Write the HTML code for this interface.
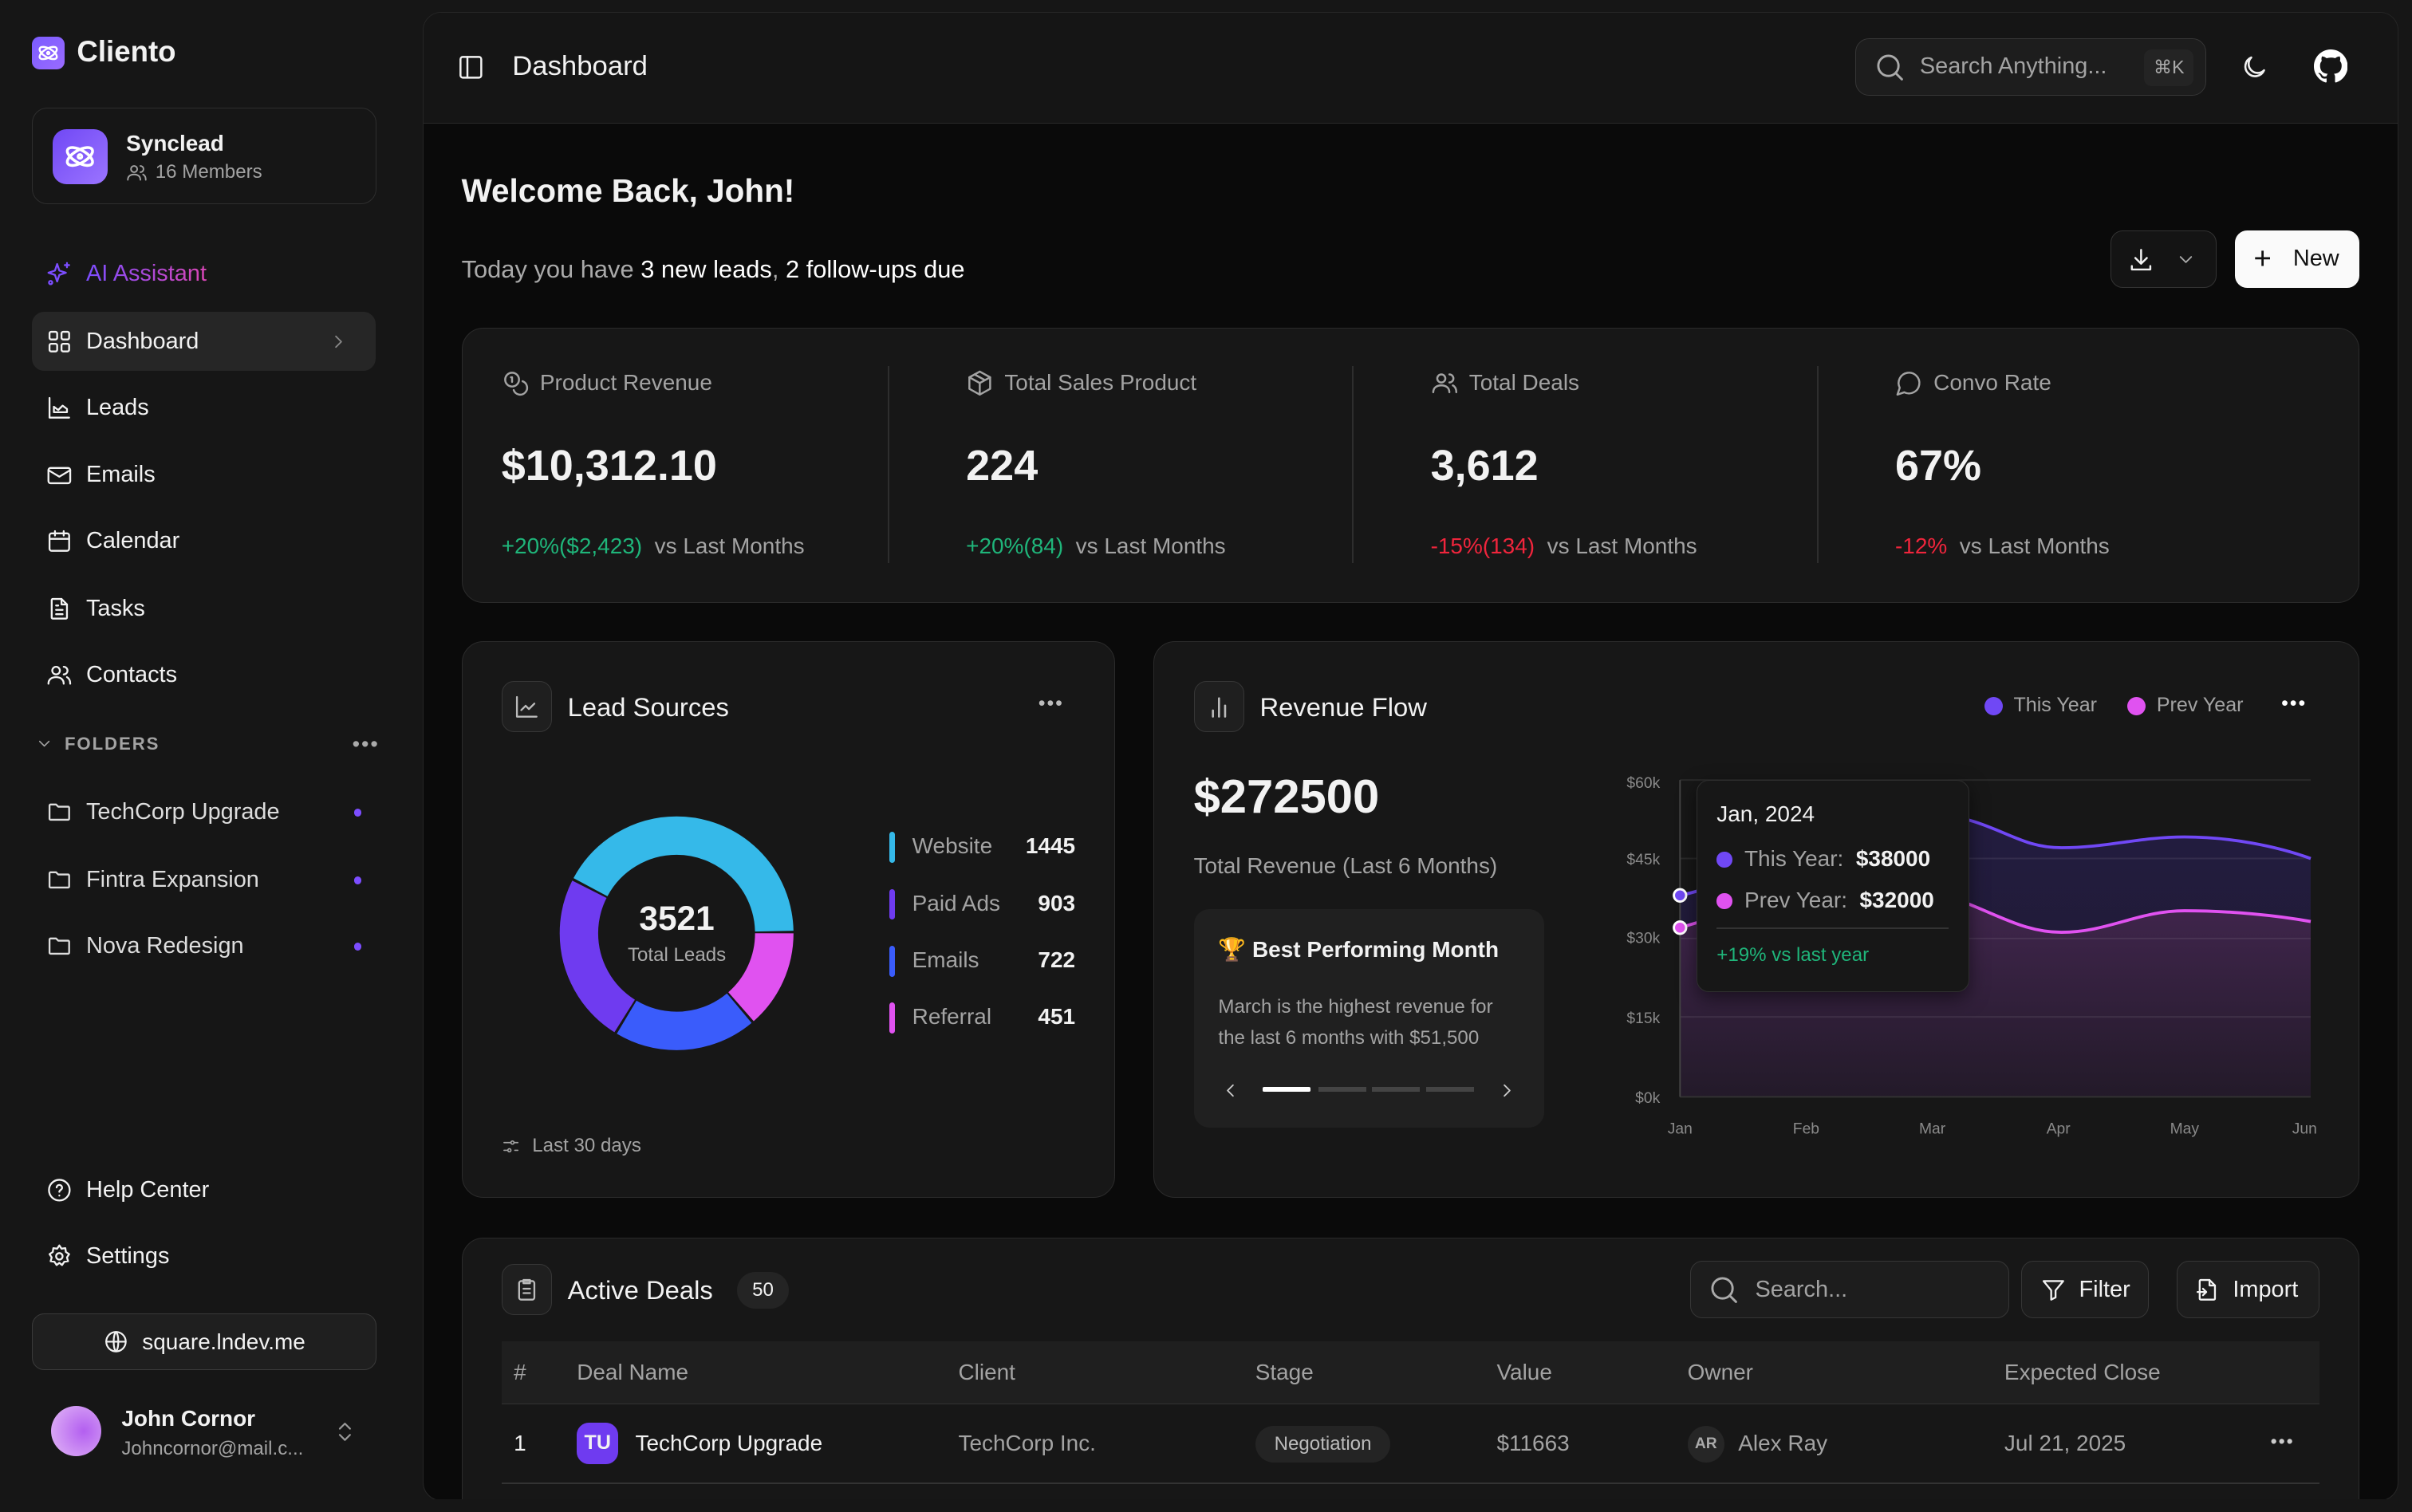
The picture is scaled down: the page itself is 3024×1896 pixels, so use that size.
<!DOCTYPE html>
<html><head><meta charset="utf-8"><style>
*{box-sizing:border-box;margin:0;padding:0}
html,body{width:3024px;height:1896px;overflow:hidden;background:#161616}
#w{zoom:1.92857;width:1568px;height:983px;position:relative;font-family:"Liberation Sans",sans-serif;color:#f2f2f2;background:#161616}
.a{position:absolute}
svg.i{fill:none;stroke:currentColor;stroke-width:1.7;stroke-linecap:round;stroke-linejoin:round}
.nav{position:absolute;left:21px;width:223px;height:38px;display:flex;align-items:center;padding-left:9px;font-size:15px;color:#f2f2f2}
.nav svg{width:17px;height:17px;margin-right:9px}
.card{position:absolute;background:#171717;border:1px solid #2b2b2b;border-radius:14px}
.muted{color:#a3a3a3}
.green{color:#1fb57a}.red{color:#f0253c}
.ib{position:absolute;width:33px;height:33px;border:1px solid #363636;border-radius:8px;background:#1f1f1f;display:flex;align-items:center;justify-content:center;color:#bbb}
.ib svg{width:17px;height:17px}
.dot{width:5px;height:5px;border-radius:50%;background:#7c4dff;position:absolute;left:209px}
</style></head><body><div id="w">
<div class="a" style="left:21px;top:24px;width:21px;height:21px;border-radius:5px;background:linear-gradient(135deg,#7b5cff,#9a6bff);display:flex;align-items:center;justify-content:center">
<svg class="i" viewBox="0 0 24 24" width="15" height="15" style="stroke:#fff;stroke-width:2"><ellipse cx="12" cy="12" rx="10" ry="4.5" transform="rotate(30 12 12)"/><ellipse cx="12" cy="12" rx="10" ry="4.5" transform="rotate(-30 12 12)"/><circle cx="12" cy="12" r="1.2"/></svg></div>
<div class="a" style="left:50px;top:23px;font-size:19px;font-weight:bold">Cliento</div>
<div class="a" style="left:21px;top:70px;width:224px;height:63px;border:1px solid #2e2e2e;border-radius:10px"></div>
<div class="a" style="left:34px;top:84px;width:36px;height:36px;border-radius:9px;background:linear-gradient(135deg,#7048f5,#9b74ff);display:flex;align-items:center;justify-content:center">
<svg class="i" viewBox="0 0 24 24" width="22" height="22" style="stroke:#fff;stroke-width:2"><ellipse cx="12" cy="12" rx="10" ry="4.5" transform="rotate(30 12 12)"/><ellipse cx="12" cy="12" rx="10" ry="4.5" transform="rotate(-30 12 12)"/><circle cx="12" cy="12" r="1.3"/></svg></div>
<div class="a" style="left:82px;top:85px;font-size:14.5px;font-weight:bold">Synclead</div>
<div class="a muted" style="left:82px;top:105px;font-size:12.5px;display:flex;align-items:center"><svg class="i" viewBox="0 0 24 24" width="14" height="14" style="margin-right:5px"><circle cx="9" cy="8" r="3.5"/><path d="M2 20c0-4 3-6 7-6s7 2 7 6M16 4.5a3.5 3.5 0 010 7M19 14c2 1 3 3 3 6"/></svg>16 Members</div>
<div class="nav" style="top:159px"><svg class="i" viewBox="0 0 24 24" style="stroke:#7c4dff"><path d="M10 3l2 6 6 2-6 2-2 6-2-6-6-2 6-2z"/><path d="M19 2v4M17 4h4"/><circle cx="4" cy="20" r="1.5"/></svg><span style="background:linear-gradient(90deg,#7c4dff,#d946b5);-webkit-background-clip:text;background-clip:text;color:transparent">AI Assistant</span></div>
<div class="nav" style="top:203px;background:#262626;border-radius:8px"><svg class="i" viewBox="0 0 24 24"><rect x="3" y="3" width="7" height="7" rx="1.5"/><rect x="14" y="3" width="7" height="7" rx="1.5"/><rect x="3" y="14" width="7" height="7" rx="1.5"/><rect x="14" y="14" width="7" height="7" rx="1.5"/></svg>Dashboard<svg class="i" viewBox="0 0 24 24" style="position:absolute;right:8px;width:14px;height:14px;color:#888"><path d="M9 6l6 6-6 6"/></svg></div>
<div class="nav" style="top:246px"><svg class="i" viewBox="0 0 24 24"><path d="M3 3v18h18"/><path d="M7 16v-5l4 3 4-4 4 3v3z"/></svg>Leads</div>
<div class="nav" style="top:290px"><svg class="i" viewBox="0 0 24 24"><rect x="2" y="5" width="20" height="14" rx="2"/><path d="M2 7l10 6 10-6"/></svg>Emails</div>
<div class="nav" style="top:333px"><svg class="i" viewBox="0 0 24 24"><rect x="3" y="5" width="18" height="16" rx="2"/><path d="M3 10h18M8 3v4M16 3v4"/></svg>Calendar</div>
<div class="nav" style="top:377px"><svg class="i" viewBox="0 0 24 24"><path d="M14 3H6a1 1 0 00-1 1v16a1 1 0 001 1h12a1 1 0 001-1V8z"/><path d="M14 3v5h5M9 13h6M9 17h6M9 9h2"/></svg>Tasks</div>
<div class="nav" style="top:420px"><svg class="i" viewBox="0 0 24 24"><circle cx="9" cy="8" r="3.5"/><path d="M2 20c0-4 3-6 7-6s7 2 7 6M16 4.5a3.5 3.5 0 010 7M19 14c2 1 3 3 3 6"/></svg>Contacts</div>
<div class="a muted" style="left:23px;top:477px;font-size:11.5px;font-weight:bold;letter-spacing:1px;display:flex;align-items:center"><svg class="i" viewBox="0 0 24 24" width="12" height="12" style="margin-right:7px"><path d="M6 9l6 6 6-6"/></svg>FOLDERS</div>
<div class="a" style="left:229px;top:476px;color:#aaa;font-size:14px;letter-spacing:1px">•••</div>
<div class="nav" style="top:509px;color:#ddd"><svg class="i" viewBox="0 0 24 24"><path d="M3 6a1 1 0 011-1h5l2 2h9a1 1 0 011 1v10a1 1 0 01-1 1H4a1 1 0 01-1-1z"/></svg>TechCorp Upgrade<div class="dot" style="top:17px"></div></div>
<div class="nav" style="top:553px;color:#ddd"><svg class="i" viewBox="0 0 24 24"><path d="M3 6a1 1 0 011-1h5l2 2h9a1 1 0 011 1v10a1 1 0 01-1 1H4a1 1 0 01-1-1z"/></svg>Fintra Expansion<div class="dot" style="top:17px"></div></div>
<div class="nav" style="top:596px;color:#ddd"><svg class="i" viewBox="0 0 24 24"><path d="M3 6a1 1 0 011-1h5l2 2h9a1 1 0 011 1v10a1 1 0 01-1 1H4a1 1 0 01-1-1z"/></svg>Nova Redesign<div class="dot" style="top:17px"></div></div>
<div class="nav" style="top:755px"><svg class="i" viewBox="0 0 24 24"><circle cx="12" cy="12" r="9.5"/><path d="M9.5 9.5a2.5 2.5 0 015 .5c0 1.7-2.5 2-2.5 3.5M12 17h.01"/></svg>Help Center</div>
<div class="nav" style="top:798px"><svg class="i" viewBox="0 0 24 24"><circle cx="12" cy="12" r="3"/><path d="M12 2l2 3 3.5-.5.5 3.5 3 2-2 3 1 3.5-3.5.5-2 3-2.5-2-2.5 2-2-3-3.5-.5 1-3.5-2-3 3-2 .5-3.5L10 5z"/></svg>Settings</div>
<div class="a" style="left:21px;top:854px;width:224px;height:37px;border:1px solid #3a3a3a;border-radius:8px;background:#1f1f1f;display:flex;align-items:center;justify-content:center;font-size:14.5px"><svg class="i" viewBox="0 0 24 24" width="16" height="16" style="margin-right:9px"><circle cx="12" cy="12" r="9.5"/><path d="M2.5 12h19M12 2.5c3 3 3 16 0 19M12 2.5c-3 3-3 16 0 19"/></svg>square.lndev.me</div>
<div class="a" style="left:33px;top:914px;width:33px;height:33px;border-radius:50%;background:radial-gradient(circle at 65% 50%,#b35ff0,#d9a6f5 80%)"></div>
<div class="a" style="left:79px;top:914px;font-size:14.5px;font-weight:bold">John Cornor</div>
<div class="a muted" style="left:79px;top:935px;font-size:12.5px">Johncornor@mail.c...</div>
<svg class="i a" viewBox="0 0 24 24" style="left:216px;top:923px;width:16px;height:16px;color:#999"><path d="M7 9l5-5 5 5M7 15l5 5 5-5"/></svg>

<div class="a" style="left:275px;top:8px;width:1284px;height:968px;background:#0a0a0a;border:1px solid #262626;border-radius:12px;overflow:hidden">
<div class="a" style="left:0;top:0;width:1284px;height:72px;background:#151515;border-bottom:1px solid #2a2a2a"></div>
</div>
<svg class="i a" viewBox="0 0 24 24" style="left:297px;top:35px;width:18px;height:18px"><rect x="3" y="3" width="18" height="18" rx="2"/><path d="M9 3v18"/></svg>
<div class="a" style="left:333px;top:33px;font-size:18px">Dashboard</div>
<div class="a" style="left:1206px;top:25px;width:228px;height:37px;border:1px solid #363636;border-radius:9px;background:#1d1d1d"></div>
<svg class="i a" viewBox="0 0 24 24" style="left:1218px;top:33px;width:21px;height:21px;color:#aaa"><circle cx="11" cy="11" r="7.5"/><path d="M21 21l-4.5-4.5"/></svg>
<div class="a muted" style="left:1248px;top:35px;font-size:15px">Search Anything...</div>
<div class="a" style="left:1394px;top:32px;width:32px;height:24px;border-radius:5px;background:#242424;color:#aaa;font-size:12px;display:flex;align-items:center;justify-content:center">⌘K</div>
<svg class="i a" viewBox="0 0 24 24" style="left:1456px;top:34px;width:19px;height:19px"><path d="M20 14.5A8 8 0 119.5 4a6.5 6.5 0 0010.5 10.5z"/></svg>
<svg class="a" viewBox="0 0 16 16" style="left:1504px;top:32px;width:22px;height:22px;fill:#fff"><path d="M8 0C3.58 0 0 3.58 0 8c0 3.54 2.29 6.53 5.47 7.59.4.07.55-.17.55-.38 0-.19-.01-.82-.01-1.49-2.01.37-2.53-.49-2.69-.94-.09-.23-.48-.94-.82-1.13-.28-.15-.68-.52-.01-.53.63-.01 1.08.58 1.23.82.72 1.21 1.87.87 2.330.66.07-.52.28-.87.51-1.07-1.78-.2-3.64-.89-3.64-3.95 0-.87.31-1.59.82-2.15-.08-.2-.36-1.02.08-2.12 0 0 .67-.21 2.2.82.64-.18 1.32-.27 2-.27.68 0 1.36.09 2 .27 1.53-1.04 2.2-.82 2.2-.82.44 1.1.16 1.92.08 2.12.51.56.82 1.27.82 2.15 0 3.07-1.87 3.75-3.65 3.95.29.25.54.73.54 1.48 0 1.07-.01 1.93-.01 2.2 0 .21.15.46.55.38A8.013 8.013 0 0016 8c0-4.42-3.58-8-8-8z"/></svg>

<div class="a" style="left:300px;top:112px;font-size:21px;font-weight:bold">Welcome Back, John!</div>
<div class="a" style="left:300px;top:166px;font-size:16px;color:#aaa">Today you have <span style="color:#fff">3 new leads</span>, <span style="color:#fff">2 follow-ups due</span></div>
<div class="a" style="left:1372px;top:150px;width:69px;height:37px;border:1px solid #333;border-radius:8px;background:#141414"></div>
<svg class="i a" viewBox="0 0 24 24" style="left:1383px;top:160px;width:18px;height:18px"><path d="M12 3v11M7 10l5 5 5-5M4 17v3h16v-3"/></svg>
<svg class="i a" viewBox="0 0 24 24" style="left:1414px;top:162px;width:14px;height:14px;color:#aaa"><path d="M6 9l6 6 6-6"/></svg>
<div class="a" style="left:1453px;top:150px;width:81px;height:37px;border-radius:8px;background:#fafafa;color:#111;font-size:15px;display:flex;align-items:center;padding-left:12px"><span style="font-size:20px;margin-right:14px;font-weight:300">+</span>New</div>

<div class="card" style="left:300px;top:213px;width:1234px;height:179px"></div>
<div class="a" style="left:577px;top:238px;width:1px;height:128px;background:#2e2e2e"></div>
<div class="a" style="left:879px;top:238px;width:1px;height:128px;background:#2e2e2e"></div>
<div class="a" style="left:1181px;top:238px;width:1px;height:128px;background:#2e2e2e"></div>
<div class="a muted" style="left:326px;top:240px;font-size:14.5px;display:flex;align-items:center"><svg class="i" viewBox="0 0 24 24" width="18" height="18" style="margin-right:7px"><circle cx="9" cy="9" r="6"/><path d="M18.1 10.4a6 6 0 11-7.7 7.7M8 7h1v4"/></svg>Product Revenue</div>
<div class="a muted" style="left:628px;top:240px;font-size:14.5px;display:flex;align-items:center"><svg class="i" viewBox="0 0 24 24" width="18" height="18" style="margin-right:7px"><path d="M12 2l9 5v10l-9 5-9-5V7z"/><path d="M3 7l9 5 9-5M12 12v10M7.5 4.5l9 5"/></svg>Total Sales Product</div>
<div class="a muted" style="left:930px;top:240px;font-size:14.5px;display:flex;align-items:center"><svg class="i" viewBox="0 0 24 24" width="18" height="18" style="margin-right:7px"><circle cx="9" cy="8" r="3.5"/><path d="M2 20c0-4 3-6 7-6s7 2 7 6M16 4.5a3.5 3.5 0 010 7M19 14c2 1 3 3 3 6"/></svg>Total Deals</div>
<div class="a muted" style="left:1232px;top:240px;font-size:14.5px;display:flex;align-items:center"><svg class="i" viewBox="0 0 24 24" width="18" height="18" style="margin-right:7px"><path d="M7.9 20A9 9 0 104 16.1L2 22z"/></svg>Convo Rate</div>
<div class="a" style="left:326px;top:287px;font-size:28px;font-weight:bold">$10,312.10</div>
<div class="a" style="left:628px;top:287px;font-size:28px;font-weight:bold">224</div>
<div class="a" style="left:930px;top:287px;font-size:28px;font-weight:bold">3,612</div>
<div class="a" style="left:1232px;top:287px;font-size:28px;font-weight:bold">67%</div>
<div class="a" style="left:326px;top:347px;font-size:14.5px"><span class="green">+20%($2,423)</span>&nbsp; <span class="muted">vs Last Months</span></div>
<div class="a" style="left:628px;top:347px;font-size:14.5px"><span class="green">+20%(84)</span>&nbsp; <span class="muted">vs Last Months</span></div>
<div class="a" style="left:930px;top:347px;font-size:14.5px"><span class="red">-15%(134)</span>&nbsp; <span class="muted">vs Last Months</span></div>
<div class="a" style="left:1232px;top:347px;font-size:14.5px"><span class="red">-12%</span>&nbsp; <span class="muted">vs Last Months</span></div>

<div class="card" style="left:300px;top:417px;width:425px;height:362px"></div>
<div class="ib" style="left:326px;top:443px"><svg class="i" viewBox="0 0 24 24"><path d="M3 3v18h18"/><path d="M7 15l4-4 3 3 5-5"/></svg></div>
<div class="a" style="left:369px;top:450px;font-size:17px">Lead Sources</div>
<div class="a" style="left:675px;top:450px;color:#bbb;font-size:13px;letter-spacing:1px">•••</div>
<svg class="a" viewBox="0 0 160 160" style="left:360px;top:527px;width:160px;height:160px">
<g transform="rotate(-90 80 80)" fill="none" stroke-width="25">
<circle cx="80" cy="80" r="63.5" stroke="#35b9e9" stroke-dasharray="167 232" stroke-dashoffset="-330.3"/>
<circle cx="80" cy="80" r="63.5" stroke="#e052f0" stroke-dasharray="54 345" stroke-dashoffset="-99.7"/>
<circle cx="80" cy="80" r="63.5" stroke="#3a5cfb" stroke-dasharray="78.3 320.7" stroke-dashoffset="-155.2"/>
<circle cx="80" cy="80" r="63.5" stroke="#6f3bf0" stroke-dasharray="93.8 305.2" stroke-dashoffset="-235"/>
</g></svg>
<div class="a" style="left:390px;top:585px;width:100px;text-align:center;font-size:22px;font-weight:bold">3521</div>
<div class="a" style="left:390px;top:614px;width:100px;text-align:center;font-size:12.5px;color:#aaa">Total Leads</div>
<div class="a" style="left:578px;top:541px;width:4px;height:20px;border-radius:2px;background:#35b9e9"></div>
<div class="a" style="left:578px;top:578px;width:4px;height:20px;border-radius:2px;background:#6f3bf0"></div>
<div class="a" style="left:578px;top:615px;width:4px;height:20px;border-radius:2px;background:#3a5cfb"></div>
<div class="a" style="left:578px;top:652px;width:4px;height:20px;border-radius:2px;background:#e052f0"></div>
<div class="a muted" style="left:593px;top:542px;font-size:14.5px"><div style="height:37px">Website</div><div style="height:37px">Paid Ads</div><div style="height:37px">Emails</div><div>Referral</div></div>
<div class="a" style="left:640px;top:542px;width:59px;text-align:right;font-size:14.5px;font-weight:bold"><div style="height:37px">1445</div><div style="height:37px">903</div><div style="height:37px">722</div><div>451</div></div>
<div class="a muted" style="left:326px;top:738px;font-size:12.5px;display:flex;align-items:center"><svg class="i" viewBox="0 0 24 24" width="12" height="12" style="margin-right:8px"><path d="M3 7h9M3 17h4M17 17h4M16 7h5"/><circle cx="14" cy="7" r="2"/><circle cx="10" cy="17" r="2"/></svg>Last 30 days</div>

<div class="card" style="left:750px;top:417px;width:784px;height:362px"></div>
<div class="ib" style="left:776px;top:443px"><svg class="i" viewBox="0 0 24 24" style="width:19px;height:19px"><path d="M7 20v-5M12 20V5M17 20v-9"/></svg></div>
<div class="a" style="left:819px;top:450px;font-size:17px">Revenue Flow</div>
<div class="a" style="left:1290px;top:453px;width:12px;height:12px;border-radius:50%;background:#7048f5"></div>
<div class="a muted" style="left:1309px;top:451px;font-size:13px">This Year</div>
<div class="a" style="left:1383px;top:453px;width:12px;height:12px;border-radius:50%;background:#e052f0"></div>
<div class="a muted" style="left:1402px;top:451px;font-size:13px">Prev Year</div>
<div class="a" style="left:1483px;top:450px;color:#fff;font-size:13px;letter-spacing:1px">•••</div>
<div class="a" style="left:776px;top:500px;font-size:31px;font-weight:bold">$272500</div>
<div class="a muted" style="left:776px;top:555px;font-size:14.5px">Total Revenue (Last 6 Months)</div>
<div class="a" style="left:776px;top:591px;width:228px;height:142px;border-radius:10px;background:#202020"></div>
<div class="a" style="left:792px;top:609px;font-size:14.5px;font-weight:bold">🏆 Best Performing Month</div>
<div class="a muted" style="left:792px;top:645px;font-size:12.5px;line-height:20px">March is the highest revenue for<br>the last 6 months with $51,500</div>
<svg class="i a" viewBox="0 0 24 24" style="left:793px;top:702px;width:14px;height:14px;color:#ccc"><path d="M15 6l-6 6 6 6"/></svg>
<div class="a" style="left:821px;top:707px;width:31px;height:3px;background:#fff;border-radius:1px"></div>
<div class="a" style="left:857px;top:707px;width:31px;height:3px;background:#444"></div>
<div class="a" style="left:892px;top:707px;width:31px;height:3px;background:#444"></div>
<div class="a" style="left:927px;top:707px;width:31px;height:3px;background:#444"></div>
<svg class="i a" viewBox="0 0 24 24" style="left:973px;top:702px;width:14px;height:14px;color:#ccc"><path d="M9 6l6 6-6 6"/></svg>
<svg class="a" viewBox="1040 495 480 250" style="left:1040px;top:495px;width:480px;height:250px;font-family:'Liberation Sans',sans-serif">
<defs><linearGradient id="g1" x1="0" y1="0" x2="0" y2="1"><stop offset="0" stop-color="#231c40"/><stop offset="1" stop-color="#1e1a30"/></linearGradient>
<linearGradient id="g2" x1="0" y1="0" x2="0" y2="1"><stop offset="0" stop-color="#42264f"/><stop offset="1" stop-color="#231a29"/></linearGradient></defs>
<path d="M1092 582C1150 570 1200 520 1256 528C1300 534 1310 551 1340 551C1370 551 1390 544 1420 544C1450 544 1480 550 1502 558V713H1092Z" fill="url(#g1)"/>
<path d="M1092 603C1150 585 1220 575 1256 580C1290 588 1310 606 1340 606C1370 606 1390 592 1420 592C1450 592 1480 595 1502 599V713H1092Z" fill="url(#g2)"/>
<g stroke="#ffffff" stroke-opacity="0.08" stroke-width="1"><path d="M1092 507H1502M1092 558H1502M1092 610H1502M1092 661H1502"/></g>
<path d="M1092 713H1502" stroke="#333" stroke-width="1"/>
<path d="M1092 582C1150 570 1200 520 1256 528C1300 534 1310 551 1340 551C1370 551 1390 544 1420 544C1450 544 1480 550 1502 558" fill="none" stroke="#7048f5" stroke-width="2"/>
<path d="M1092 603C1150 585 1220 575 1256 580C1290 588 1310 606 1340 606C1370 606 1390 592 1420 592C1450 592 1480 595 1502 599" fill="none" stroke="#e052f0" stroke-width="2"/>
<path d="M1092 507V713" stroke="#444" stroke-width="1"/>
<circle cx="1092" cy="582" r="4" fill="#7048f5" stroke="#fff" stroke-width="1.5"/>
<circle cx="1092" cy="603" r="4" fill="#e052f0" stroke="#fff" stroke-width="1.5"/>
<g fill="#8a8a8a" font-size="10" text-anchor="end"><text x="1079" y="512">$60k</text><text x="1079" y="562">$45k</text><text x="1079" y="613">$30k</text><text x="1079" y="665">$15k</text><text x="1079" y="717">$0k</text></g>
<g fill="#8a8a8a" font-size="10" text-anchor="middle"><text x="1092" y="737">Jan</text><text x="1174" y="737">Feb</text><text x="1256" y="737">Mar</text><text x="1338" y="737">Apr</text><text x="1420" y="737">May</text><text x="1498" y="737">Jun</text></g>
</svg>
<div class="a" style="left:1103px;top:507px;width:177px;height:138px;background:#171717;border:1px solid #2e2e2e;border-radius:8px;box-shadow:0 4px 12px rgba(0,0,0,.5)"></div>
<div class="a" style="left:1116px;top:521px;font-size:14.5px">Jan, 2024</div>
<div class="a" style="left:1116px;top:554px;width:10px;height:10px;border-radius:50%;background:#7048f5"></div>
<div class="a" style="left:1134px;top:550px;font-size:14.5px"><span class="muted">This Year:</span>&nbsp; <b>$38000</b></div>
<div class="a" style="left:1116px;top:581px;width:10px;height:10px;border-radius:50%;background:#e052f0"></div>
<div class="a" style="left:1134px;top:577px;font-size:14.5px"><span class="muted">Prev Year:</span>&nbsp; <b>$32000</b></div>
<div class="a" style="left:1116px;top:603px;width:151px;height:1px;background:#333"></div>
<div class="a green" style="left:1116px;top:614px;font-size:12.5px">+19% vs last year</div>

<div class="card" style="left:300px;top:805px;width:1234px;height:200px;border-radius:14px 14px 0 0"></div>
<div class="a" style="left:276px;top:975px;width:1282px;height:8px;background:#161616"></div>
<div class="ib" style="left:326px;top:822px"><svg class="i" viewBox="0 0 24 24"><rect x="5" y="4" width="14" height="17" rx="2"/><path d="M9 3h6v3H9zM9 11h6M9 15h6"/></svg></div>
<div class="a" style="left:369px;top:829px;font-size:17px">Active Deals</div>
<div class="a" style="left:479px;top:827px;width:34px;height:24px;border-radius:12px;background:#242424;font-size:12.5px;display:flex;align-items:center;justify-content:center">50</div>
<div class="a" style="left:1099px;top:820px;width:207px;height:37px;border:1px solid #363636;border-radius:8px;background:#1d1d1d"></div>
<svg class="i a" viewBox="0 0 24 24" style="left:1110px;top:828px;width:21px;height:21px;color:#aaa"><circle cx="11" cy="11" r="7.5"/><path d="M21 21l-4.5-4.5"/></svg>
<div class="a muted" style="left:1141px;top:830px;font-size:15px">Search...</div>
<div class="a" style="left:1314px;top:820px;width:83px;height:37px;border:1px solid #363636;border-radius:8px;background:#1d1d1d;display:flex;align-items:center;padding-left:12px;font-size:15px"><svg class="i" viewBox="0 0 24 24" width="17" height="17" style="margin-right:8px"><path d="M3 4h18l-7 8.5V19l-4 2v-8.5z"/></svg>Filter</div>
<div class="a" style="left:1415px;top:820px;width:93px;height:37px;border:1px solid #363636;border-radius:8px;background:#1d1d1d;display:flex;align-items:center;padding-left:11px;font-size:15px"><svg class="i" viewBox="0 0 24 24" width="17" height="17" style="margin-right:8px"><path d="M14 3H6a1 1 0 00-1 1v16a1 1 0 001 1h12a1 1 0 001-1V8z"/><path d="M14 3v5h5M3 14h8M8 11l3 3-3 3"/></svg>Import</div>
<div class="a" style="left:326px;top:872px;width:1182px;height:41px;background:#1f1f1f;border-bottom:1px solid #333"></div>
<div class="a muted" style="top:884px;left:0;width:1568px;font-size:14.5px">
<span class="a" style="left:334px">#</span><span class="a" style="left:375px">Deal Name</span><span class="a" style="left:623px">Client</span><span class="a" style="left:816px">Stage</span><span class="a" style="left:973px">Value</span><span class="a" style="left:1097px">Owner</span><span class="a" style="left:1303px">Expected Close</span></div>
<div class="a" style="left:326px;top:964px;width:1182px;height:1px;background:#333"></div>
<div class="a" style="left:334px;top:930px;font-size:14.5px">1</div>
<div class="a" style="left:375px;top:925px;width:27px;height:27px;border-radius:8px;background:#6f3bf0;font-size:13px;font-weight:bold;display:flex;align-items:center;justify-content:center">TU</div>
<div class="a" style="left:413px;top:930px;font-size:14.5px">TechCorp Upgrade</div>
<div class="a muted" style="left:623px;top:930px;font-size:14.5px">TechCorp Inc.</div>
<div class="a" style="left:816px;top:927px;width:88px;height:24px;border-radius:12px;background:#242424;color:#bbb;font-size:12.5px;display:flex;align-items:center;justify-content:center">Negotiation</div>
<div class="a muted" style="left:973px;top:930px;font-size:14.5px">$11663</div>
<div class="a" style="left:1097px;top:927px;width:24px;height:24px;border-radius:50%;background:#262626;color:#aaa;font-size:10px;font-weight:bold;display:flex;align-items:center;justify-content:center">AR</div>
<div class="a muted" style="left:1130px;top:930px;font-size:14.5px">Alex Ray</div>
<div class="a muted" style="left:1303px;top:930px;font-size:14.5px">Jul 21, 2025</div>
<div class="a" style="left:1476px;top:930px;font-size:12px;color:#ccc;letter-spacing:1px">•••</div>
</div></body></html>
